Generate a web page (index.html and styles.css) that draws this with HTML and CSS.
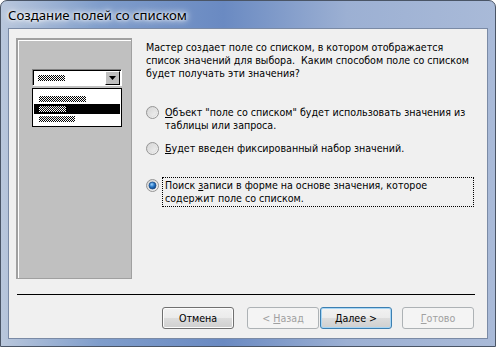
FILE: index.html
```html
<!DOCTYPE html>
<html lang="ru">
<head>
<meta charset="utf-8">
<title>Создание полей со списком</title>
<link rel="stylesheet" href="styles.css">
</head>
<body>
<div class="window">
  <div class="titlebar"><span class="title">Создание полей со списком</span></div>
  <div class="client">
    <div class="main">
      <div class="picture">
        <div class="combo">
          <span class="pat w7"></span>
          <span class="dropbtn"><svg width="7" height="4" viewBox="0 0 7 4"><path d="M0 0h7L3.5 4z" fill="#000"/></svg></span>
        </div>
        <div class="list">
          <div class="item"><span class="pat w13"></span></div>
          <div class="item sel"><span class="pat w7 inv"></span></div>
          <div class="item"><span class="pat w10"></span></div>
        </div>
      </div>
      <div class="content">
        <p class="intro">Мастер создает поле со списком, в котором отображается<br>список значений для выбора.&nbsp; Каким способом поле со списком<br>будет получать эти значения?</p>
        <div class="options">
          <div class="option">
            <span class="radio"><svg width="13" height="13" viewBox="0 0 13 13"><defs><linearGradient id="rg1" x1="0" y1="0" x2="1" y2="1"><stop offset="0" stop-color="#cfcfcf"/><stop offset="1" stop-color="#f8f8f8"/></linearGradient></defs><circle cx="6.5" cy="6.5" r="6" fill="url(#rg1)" stroke="#959595"/><circle cx="6.5" cy="6.5" r="4" fill="none" stroke="#e0e0e0"/></svg></span>
            <span class="label"><u>О</u>бъект "поле со списком" будет использовать значения из<br>таблицы или запроса.</span>
          </div>
          <div class="option">
            <span class="radio"><svg width="13" height="13" viewBox="0 0 13 13"><defs><linearGradient id="rg2" x1="0" y1="0" x2="1" y2="1"><stop offset="0" stop-color="#cfcfcf"/><stop offset="1" stop-color="#f8f8f8"/></linearGradient></defs><circle cx="6.5" cy="6.5" r="6" fill="url(#rg2)" stroke="#959595"/><circle cx="6.5" cy="6.5" r="4" fill="none" stroke="#e0e0e0"/></svg></span>
            <span class="label"><u>Б</u>удет введен фиксированный набор значений.</span>
          </div>
          <div class="option">
            <span class="radio"><svg width="13" height="13" viewBox="0 0 13 13"><defs><linearGradient id="rg3" x1="0" y1="0" x2="1" y2="1"><stop offset="0" stop-color="#cfcfcf"/><stop offset="1" stop-color="#f8f8f8"/></linearGradient><radialGradient id="dot" cx="0.4" cy="0.35" r="0.7"><stop offset="0" stop-color="#9fd3ff"/><stop offset="0.5" stop-color="#2a79c6"/><stop offset="1" stop-color="#0b3c80"/></radialGradient></defs><circle cx="6.5" cy="6.5" r="6" fill="url(#rg3)" stroke="#959595"/><circle cx="6.5" cy="6.5" r="3.5" fill="url(#dot)" stroke="#1d4e89" stroke-width="0.8"/></svg></span>
            <span class="label focus">Поиск <u>з</u>аписи в форме на основе значения, которое<br>содержит поле со списком.</span>
          </div>
        </div>
      </div>
    </div>
    <div class="separator"></div>
    <div class="buttons">
      <button class="btn">Отмена</button>
      <div class="nav">
        <button class="btn disabled">&lt; <u>Н</u>азад</button>
        <button class="btn default"><u>Д</u>алее &gt;</button>
      </div>
      <button class="btn disabled"><u>Г</u>отово</button>
    </div>
  </div>
</div>
</body>
</html>
```
FILE: styles.css
```css
* { box-sizing: border-box; }
html, body { margin: 0; padding: 0; }
body {
  width: 496px;
  height: 347px;
  background: #ffffff;
  font-family: "DejaVu Sans Condensed", "Liberation Sans", sans-serif;
  font-size: 10.6px;
  color: #000;
}
.window {
  width: 496px;
  height: 347px;
  display: flex;
  flex-direction: column;
  padding: 0 7px 7px 7px;
  border: 1px solid #4a5566;
  border-radius: 7px 7px 0 0;
  background:
    linear-gradient(90deg, #b9c7dc 0%, #7f9dcb 20%, #6a8ac2 45%, #9cb0d3 70%, #a9bad8 100%);
}
.titlebar {
  height: 27px;
  display: flex;
  align-items: center;
  padding-left: 0;
}
.title {
  font-family: "Noto Sans", "Liberation Sans", sans-serif;
  font-size: 13.2px;
  color: #000;
  text-shadow: 0 0 10px #fff, 0 0 6px #fff, 0 0 3px #fff;
}
.client {
  flex: 1;
  background: #f0f0f0;
  border: 1px solid #7a8aa5;
  display: flex;
  flex-direction: column;
  padding: 9px 10px 0 7px;
}
.main {
  display: flex;
  gap: 14px;
  height: 241px;
}
.picture {
  width: 116px;
  flex: none;
  height: 241px;
  background: #c0c0c0;
  border-top: 2px solid #a0a0a0;
  border-left: 2px solid #a0a0a0;
  border-right: 1px solid #a0a0a0;
  border-bottom: 1px solid #a0a0a0;
  box-shadow: inset 1px 1px 0 #ffffff;
  padding: 29px 0 0 14px;
}
.combo {
  width: 90px;
  height: 17px;
  background: #fff;
  border-top: 1px solid #808080;
  border-left: 1px solid #808080;
  border-right: 1px solid #fff;
  border-bottom: 1px solid #fff;
  box-shadow: inset 1px 1px 0 #000;
  display: flex;
  align-items: center;
  justify-content: space-between;
  padding: 0 1px 0 5px;
}
.dropbtn {
  width: 15px;
  height: 14px;
  background: #c0c0c0;
  border-top: 1px solid #fff;
  border-left: 1px solid #fff;
  border-right: 1px solid #000;
  border-bottom: 1px solid #000;
  display: flex;
  align-items: center;
  justify-content: center;
  margin-top: 1px;
}
.list {
  width: 90px;
  margin-top: 2px;
  background: #fff;
  border: 1px solid #000;
  padding: 5px 1px 2px 1px;
}
.item {
  height: 10px;
  display: flex;
  align-items: center;
  padding-left: 5px;
}
.item.sel { background: #000; }
.pat {
  display: block;
  height: 6px;
  background: repeating-conic-gradient(#000 0 25%, transparent 0 50%) 0 0 / 2px 2px;
}
.pat.inv { background: repeating-conic-gradient(#fff 0 25%, transparent 0 50%) 0 0 / 2px 2px; }
.pat.w7 { width: 27px; }
.pat.w13 { width: 47px; }
.pat.w10 { width: 36px; }
.content {
  flex: 1;
  padding-top: 3px;
}
.intro {
  margin: 0;
  line-height: 13px;
  white-space: nowrap;
}
.options {
  display: flex;
  flex-direction: column;
  margin-top: 26px;
  gap: 8px;
}
.option {
  display: flex;
  align-items: flex-start;
  gap: 3px;
  line-height: 13px;
}
.option:nth-child(3) { margin-top: 14px; }
.radio {
  width: 13px;
  height: 13px;
  flex: none;
  display: block;
}
.radio svg { display: block; }
.label {
  padding: 1px 2px;
  width: 312px;
  border: 1px solid transparent;
  margin-top: -2px;
  white-space: nowrap;
}
.label.focus { border: 1px dotted #000; }
u { text-decoration: underline; text-underline-offset: 1px; }
.separator {
  height: 1px;
  background: #000;
  margin: 15px 2px 0 1px;
}
.buttons {
  display: flex;
  align-items: center;
  margin-top: 12px;
  padding-left: 146px;
}
.nav { display: flex; margin-left: 13px; }
.btn {
  width: 72px;
  height: 22px;
  font-family: "DejaVu Sans Condensed", "Liberation Sans", sans-serif;
  font-size: 10.6px;
  color: #000;
  border: 1px solid #707070;
  border-radius: 3px;
  background: linear-gradient(#f2f2f2 0%, #ebebeb 50%, #dddddd 51%, #cfcfcf 100%);
  box-shadow: inset 0 0 0 1px #fcfcfc;
  padding: 0;
}
.btn.disabled {
  color: #a0a0a0;
  border-color: #adb2b5;
  background: #f4f4f4;
  box-shadow: none;
}
.btn.default {
  border-color: #3c7fb1;
  box-shadow: inset 0 0 0 1px #a7d6f5;
}
.nav .btn.default { margin-left: 1px; }
.buttons > .btn:last-child { margin-left: 10px; }
```
